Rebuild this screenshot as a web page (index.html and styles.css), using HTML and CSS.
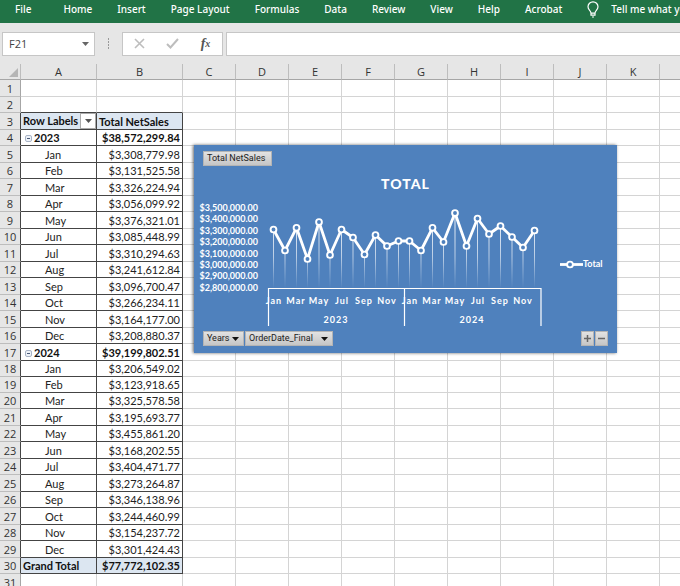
FILE: index.html
```html
<!DOCTYPE html>
<html lang="en">
<head>
<meta charset="utf-8">
<title>Net Sales Workbook</title>
<link rel="stylesheet" href="styles.css">
</head>
<body>
<div class="app">
  <nav class="ribbon" aria-label="Ribbon">
    <button class="tab tab-file">File</button>
    <button class="tab">Home</button>
    <button class="tab">Insert</button>
    <button class="tab">Page Layout</button>
    <button class="tab">Formulas</button>
    <button class="tab">Data</button>
    <button class="tab">Review</button>
    <button class="tab">View</button>
    <button class="tab">Help</button>
    <button class="tab">Acrobat</button>
    <button class="tab tell-me">
      <svg class="bulb" viewBox="0 0 12 17" aria-hidden="true"><path d="M4 12.2C4 9.6 1 9 1 5.8a5 5 0 0 1 10 0C11 9 8 9.6 8 12.2ZM4 12.2v2h4v-2M5 16h2" fill="none" stroke="#fff" stroke-width="1.2"/></svg>
      Tell me what you want to do
    </button>
  </nav>

  <div class="formula-bar">
    <div class="name-box">
      <input class="name-input" type="text" value="F21" aria-label="Name box">
      <button class="name-arrow" aria-label="Show names"><svg width="7" height="4" viewBox="0 0 7 4"><path d="M0 0h7L3.500 4Z" fill="#666"/></svg></button>
    </div>
    <svg class="grip" viewBox="0 0 3 11" aria-hidden="true"><path d="M1 0h1v2H1zM1 3h1v2H1zM1 6h1v2H1zM1 9h1v2H1z" fill="#999"/></svg>
    <div class="formula-tools">
      <button class="tool" aria-label="Cancel"><svg width="11" height="11" viewBox="0 0 11 11"><path d="M1 1l9 9M10 1l-9 9" stroke="#bdbdbd" stroke-width="1.6"/></svg></button>
      <button class="tool" aria-label="Enter"><svg width="13" height="11" viewBox="0 0 13 11"><path d="M1 6l3.500 3.500L12 1" fill="none" stroke="#bdbdbd" stroke-width="2"/></svg></button>
      <button class="tool fx" aria-label="Insert function"><i>f</i><sub>x</sub></button>
    </div>
    <input class="formula-input" type="text" aria-label="Formula">
  </div>

  <main class="sheet">
    <table class="grid">
      <colgroup><col class="c-num"><col class="c-a"><col class="c-b"><col class="c-std" span="9"><col></colgroup>
      <thead>
        <tr><th class="corner"><svg width="9" height="9" viewBox="0 0 9 9"><path d="M9 0v9H0Z" fill="#b5b5b5"/></svg></th><th>A</th><th>B</th><th>C</th><th>D</th><th>E</th><th>F</th><th>G</th><th>H</th><th>I</th><th>J</th><th>K</th><th></th></tr>
      </thead>
      <tbody>
        <tr><th>1</th><td></td><td></td><td class="rest" colspan="10"></td></tr>
        <tr class="before"><th>2</th><td></td><td></td><td class="rest" colspan="10"></td></tr>
        <tr class="pv head"><th>3</th><td><div class="label-cell">Row Labels<button class="filter" aria-label="Filter row labels"><svg width="7" height="4" viewBox="0 0 7 4"><path d="M0 0h7L3.500 4Z" fill="#555"/></svg></button></div></td><td>Total NetSales</td><td class="rest" colspan="10"></td></tr>
        <tr class="pv year"><th>4</th><td><button class="fold" aria-label="Collapse 2023"></button>2023</td><td>$38,572,299.84</td><td class="rest" colspan="10"></td></tr>
        <tr class="pv"><th>5</th><td>Jan</td><td>$3,308,779.98</td><td class="rest" colspan="10"></td></tr>
        <tr class="pv"><th>6</th><td>Feb</td><td>$3,131,525.58</td><td class="rest" colspan="10"></td></tr>
        <tr class="pv"><th>7</th><td>Mar</td><td>$3,326,224.94</td><td class="rest" colspan="10"></td></tr>
        <tr class="pv"><th>8</th><td>Apr</td><td>$3,056,099.92</td><td class="rest" colspan="10"></td></tr>
        <tr class="pv"><th>9</th><td>May</td><td>$3,376,321.01</td><td class="rest" colspan="10"></td></tr>
        <tr class="pv"><th>10</th><td>Jun</td><td>$3,085,448.99</td><td class="rest" colspan="10"></td></tr>
        <tr class="pv"><th>11</th><td>Jul</td><td>$3,310,294.63</td><td class="rest" colspan="10"></td></tr>
        <tr class="pv"><th>12</th><td>Aug</td><td>$3,241,612.84</td><td class="rest" colspan="10"></td></tr>
        <tr class="pv"><th>13</th><td>Sep</td><td>$3,096,700.47</td><td class="rest" colspan="10"></td></tr>
        <tr class="pv"><th>14</th><td>Oct</td><td>$3,266,234.11</td><td class="rest" colspan="10"></td></tr>
        <tr class="pv"><th>15</th><td>Nov</td><td>$3,164,177.00</td><td class="rest" colspan="10"></td></tr>
        <tr class="pv"><th>16</th><td>Dec</td><td>$3,208,880.37</td><td class="rest" colspan="10"></td></tr>
        <tr class="pv year"><th>17</th><td><button class="fold" aria-label="Collapse 2024"></button>2024</td><td>$39,199,802.51</td><td class="rest" colspan="10"></td></tr>
        <tr class="pv"><th>18</th><td>Jan</td><td>$3,206,549.02</td><td class="rest" colspan="10"></td></tr>
        <tr class="pv"><th>19</th><td>Feb</td><td>$3,123,918.65</td><td class="rest" colspan="10"></td></tr>
        <tr class="pv"><th>20</th><td>Mar</td><td>$3,325,578.58</td><td class="rest" colspan="10"></td></tr>
        <tr class="pv"><th>21</th><td>Apr</td><td>$3,195,693.77</td><td class="rest" colspan="10"></td></tr>
        <tr class="pv"><th>22</th><td>May</td><td>$3,455,861.20</td><td class="rest" colspan="10"></td></tr>
        <tr class="pv"><th>23</th><td>Jun</td><td>$3,168,202.55</td><td class="rest" colspan="10"></td></tr>
        <tr class="pv"><th>24</th><td>Jul</td><td>$3,404,471.77</td><td class="rest" colspan="10"></td></tr>
        <tr class="pv"><th>25</th><td>Aug</td><td>$3,273,264.87</td><td class="rest" colspan="10"></td></tr>
        <tr class="pv"><th>26</th><td>Sep</td><td>$3,346,138.96</td><td class="rest" colspan="10"></td></tr>
        <tr class="pv"><th>27</th><td>Oct</td><td>$3,244,460.99</td><td class="rest" colspan="10"></td></tr>
        <tr class="pv"><th>28</th><td>Nov</td><td>$3,154,237.72</td><td class="rest" colspan="10"></td></tr>
        <tr class="pv"><th>29</th><td>Dec</td><td>$3,301,424.43</td><td class="rest" colspan="10"></td></tr>
        <tr class="pv total"><th>30</th><td>Grand Total</td><td>$77,772,102.35</td><td class="rest" colspan="10"></td></tr>
        <tr><th>31</th><td></td><td></td><td class="rest" colspan="10"></td></tr>
      </tbody>
    </table>

    <section class="chart" aria-label="Total net sales chart">
      <div class="chart-row"><button class="field">Total NetSales</button></div>
      <h2 class="chart-title">TOTAL</h2>
      <svg class="plot" viewBox="0 0 423 134" role="img" aria-label="Monthly net sales, 2023 and 2024">
        <defs>
          <linearGradient id="drop" gradientUnits="userSpaceOnUse" x1="0" y1="30" x2="0" y2="92"><stop offset="0" stop-color="#fff" stop-opacity=".85"/><stop offset=".5" stop-color="#fff" stop-opacity=".6"/><stop offset="1" stop-color="#fff" stop-opacity="0"/></linearGradient>
          <marker id="dot" markerUnits="userSpaceOnUse" markerWidth="10" markerHeight="10" refX="5" refY="5"><circle cx="5" cy="5" r="2.900" fill="#4f81bd" stroke="#fff" stroke-width="1.900"/></marker>
        </defs>
        <g class="axis-value">
          <text x="64" y="15">$3,500,000.00</text>
          <text x="64" y="26">$3,400,000.00</text>
          <text x="64" y="38">$3,300,000.00</text>
          <text x="64" y="49">$3,200,000.00</text>
          <text x="64" y="61">$3,100,000.00</text>
          <text x="64" y="72">$3,000,000.00</text>
          <text x="64" y="83">$2,900,000.00</text>
          <text x="64" y="95">$2,800,000.00</text>
        </g>
        <path fill="none" stroke="url(#drop)" stroke-width="1" d="M79.500 34V92M91 54V92M102.500 32V92M113.500 63V92M125 26V92M136 59V92M147.500 34V92M159 42V92M170.500 58V92M181.500 39V92M193 50V92M204.500 45V92M215.500 45V92M227 55V92M238.500 32V92M249.500 46V92M261 17V92M272.500 50V92M283.500 22V92M295 38V92M306.500 30V92M318 41V92M329 52V92M340.500 35V92"/>
        <path fill="none" stroke="#fff" stroke-width="2.800" stroke-linejoin="round" marker-start="url(#dot)" marker-mid="url(#dot)" marker-end="url(#dot)" d="M79.500 33.500L91 54.500L102.500 31.800L113.500 63L125 26L136 59L147.500 33.500L159 41.500L170.500 58.500L181.500 39L193 50L204.500 45L215.500 45L227 54.500L238.500 31.800L249.500 46L261 17L272.500 50L283.500 22.500L295 38L306.500 30L318 41L329 51.500L340.500 34.500"/>
        <path fill="none" stroke="#fff" stroke-width="1.200" d="M74.500 130V92.500H347V130M210.500 92.500V130"/>
        <g class="axis-month">
          <text x="80" y="108">Jan</text><text x="102" y="108">Mar</text><text x="125" y="108">May</text><text x="148" y="108">Jul</text><text x="170" y="108">Sep</text><text x="193" y="108">Nov</text>
          <text x="216" y="108">Jan</text><text x="238" y="108">Mar</text><text x="261" y="108">May</text><text x="284" y="108">Jul</text><text x="306" y="108">Sep</text><text x="329" y="108">Nov</text>
          <text x="142" y="127">2023</text><text x="278" y="127">2024</text>
        </g>
        <path d="M366 68.500H389" stroke="#fff" stroke-width="2.800"/>
        <circle cx="376" cy="68.500" r="2.900" fill="#4f81bd" stroke="#fff" stroke-width="1.900"/>
        <text class="legend" x="389" y="71">Total</text>
      </svg>
      <div class="chart-row">
        <button class="field drop">Years<svg width="7" height="4" viewBox="0 0 7 4"><path d="M0 0h7L3.500 4Z" fill="#111"/></svg></button>
        <button class="field drop wide">OrderDate_Final<svg width="7" height="4" viewBox="0 0 7 4"><path d="M0 0h7L3.500 4Z" fill="#111"/></svg></button>
        <button class="field zoom first" aria-label="Expand field"><svg width="7" height="7" viewBox="0 0 7 7"><path d="M0 3.500h7M3.500 0v7" stroke="#666" stroke-width="1.500"/></svg></button>
        <button class="field zoom" aria-label="Collapse field"><svg width="7" height="7" viewBox="0 0 7 7"><path d="M0 3.500h7" stroke="#666" stroke-width="1.500"/></svg></button>
      </div>
    </section>
  </main>
</div>
</body>
</html>
```
FILE: styles.css
```css
* { box-sizing: border-box; }

body {
  margin: 0;
  background: #fff;
  color: #222;
  font: 11px/16px Lato, "Liberation Sans", sans-serif;
}

button, input {
  margin: 0;
  padding: 0;
  border: 0;
  border-radius: 0;
  background: none;
  color: inherit;
  font: inherit;
}

svg { display: block; flex: none; }

.app {
  display: flex;
  flex-direction: column;
  height: 100vh;
  overflow: hidden;
}

/* Ribbon */
.ribbon {
  display: flex;
  flex: none;
  gap: 25px;
  height: 23px;
  padding: 0 0 5px 15px;
  overflow: hidden;
  background: #217346;
  color: #fff;
  font: 500 10px/18px "Noto Sans", "Open Sans", sans-serif;
}

.tab { flex: none; white-space: nowrap; }
.tab-file { margin-right: 7px; }
.tell-me { display: flex; align-items: center; gap: 12px; }
.bulb { width: 12px; height: 17px; }

/* Formula bar */
.formula-bar {
  display: flex;
  flex: none;
  align-items: center;
  height: 41px;
  padding: 0 0 0 2px;
  background: #e6e6e6;
}

.name-box, .formula-tools, .formula-input {
  height: 24px;
  border: 1px solid #c6c6c6;
  background: #fff;
}

.name-box { display: flex; width: 93px; }

.name-input {
  flex: 1;
  min-width: 0;
  padding-left: 6px;
  font: 11px/16px "Open Sans", sans-serif;
  color: #444;
}

.name-arrow { padding: 0 5px; }
.grip { width: 3px; height: 11px; margin: 0 12px; }

.formula-tools {
  display: flex;
  flex: none;
  width: 101px;
  margin-right: 3px;
}

.tool {
  display: flex;
  flex: 1;
  align-items: center;
  justify-content: center;
}

.fx { font: bold 14px/16px "Liberation Serif", serif; color: #555; }
.fx sub { font-size: 10px; line-height: 10px; font-style: italic; }
.formula-input { flex: 1; min-width: 0; border-right: 0; padding: 0 6px; }

/* Worksheet */
.sheet {
  position: relative;
  flex: 1;
  min-height: 0;
  overflow: hidden;
}

.grid {
  width: 100%;
  table-layout: fixed;
  border-spacing: 0;
}

.c-num { width: 21px; }
.c-a { width: 76px; }
.c-b { width: 86px; }
.c-std { width: 53px; }

th, td {
  height: 16px;
  padding: 0;
  border: solid #d4d4d4;
  border-width: 0 1px 1px 0;
  line-height: 15px;
  white-space: nowrap;
}

tbody tr:nth-child(odd) > * { height: 17px; }
tbody tr:nth-child(20n + 19) > * { height: 16px; }

th {
  background: #e6e6e6;
  border-color: #bdbdbd;
  color: #333;
  font: 11px/15px "Open Sans", sans-serif;
}

thead th { border-bottom-color: #a6a6a6; }
thead th:last-child { border-right: 0; }
.corner svg { margin: 2px 0 0 9px; }
tbody th { border-right-color: #a6a6a6; }

.rest {
  border-right: 0;
  background: repeating-linear-gradient(to right, transparent 0 52px, #d4d4d4 52px 53px);
}

.before td:nth-child(-n + 3), .pv td:nth-child(-n + 3) { border-bottom-color: #444; }
.pv th, .pv td:nth-child(-n + 3) { border-right-color: #444; }
.pv td:nth-child(2) { padding-left: 24px; }
.pv td:nth-child(3) { padding-right: 2px; text-align: right; }

.head td:nth-child(-n + 3), .total td:nth-child(-n + 3) {
  background: #dce6f1;
  font-weight: bold;
  color: #111;
}

.pv.head td:nth-child(2), .pv.total td:nth-child(2) { padding-left: 2px; }
.pv.head td:nth-child(3) { padding-left: 2px; text-align: left; }
.year td { font-weight: bold; color: #111; }
.pv.year td:nth-child(2) { padding-left: 4px; }

.label-cell { display: flex; justify-content: space-between; height: 16px; }

.filter {
  display: flex;
  align-items: center;
  justify-content: center;
  width: 16px;
  border: 1px solid #aaa;
  background: #fff;
}

.fold {
  width: 7px;
  height: 7px;
  margin-right: 2px;
  border: 1px solid #a9b4c6;
  border-radius: 2px;
  background: linear-gradient(#4a5a78, #4a5a78) center / 3px 1px no-repeat #eef2f8;
  vertical-align: 1px;
}

/* Floating chart */
.chart {
  position: absolute;
  top: 81px;
  left: 194px;
  width: 423px;
  padding: 6px 0 7px;
  background: #4f81bd;
  box-shadow: -1px 0 3px rgba(0, 0, 0, .6);
  color: #fff;
}

.chart-row {
  display: flex;
  gap: 1px;
  padding: 0 9px;
}

.plot + .chart-row { padding-top: 1px; }

.field {
  display: flex;
  align-items: center;
  justify-content: space-between;
  height: 15px;
  padding: 0 4px 0 3px;
  border: 1px solid #b4b4b4;
  background: linear-gradient(#e2e2e2, #c6c6c6);
  color: #222;
  font: 9px/13px Roboto, "Liberation Sans", sans-serif;
}

.chart-row:first-child .field { width: 69px; }
.field.drop { width: 41px; }
.field.wide { width: 88px; }
.zoom { width: 13px; padding: 0 2px; }
.first { margin-left: auto; }

.chart-title {
  height: 30px;
  margin: 0;
  padding-top: 10px;
  text-align: center;
  font: 900 14px/16px Lato, sans-serif;
  letter-spacing: 1px;
}

.plot { width: 100%; height: auto; }
.plot text { fill: #fff; font: bold 9px Lato, sans-serif; }
.axis-value text { text-anchor: end; }
.axis-month text { text-anchor: middle; letter-spacing: 1px; }
```
